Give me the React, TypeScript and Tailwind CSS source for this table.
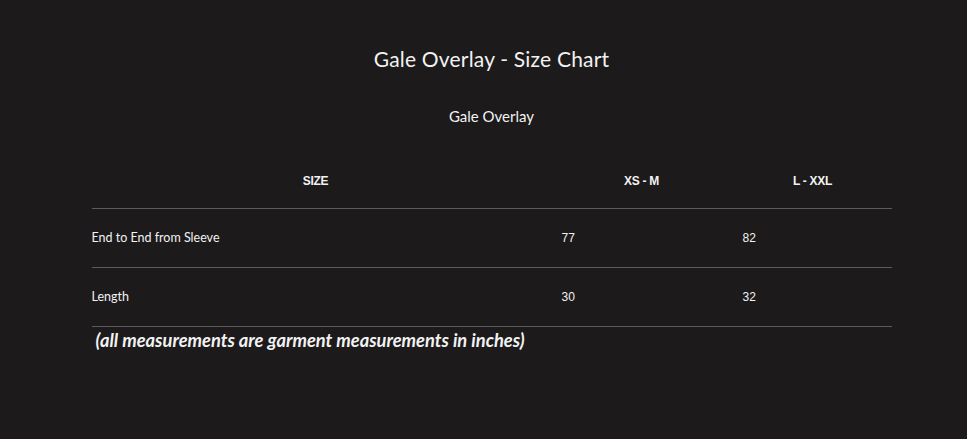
import React from 'react'

const ROWS = [
  { label: 'End to End from Sleeve', a: '77', b: '82' },
  { label: 'Length', a: '30', b: '32' },
]

function App() {
  return (
    <div className="min-h-[439px] w-full bg-[#1c1a1b] text-[#f2f2f2] font-['Lato',sans-serif] pl-[16px]">
      <div className="flex flex-col items-center">
        <h1 className="mt-[44px] text-[21px] leading-[30px] tracking-[0.2px]">Gale Overlay - Size Chart</h1>
        <p className="mt-[32px] text-[15px] leading-[20px]">Gale Overlay</p>
      </div>
      <div className="mx-auto w-[800px] mt-[40px]">
        <div className="grid grid-cols-[458px_184px_158px] h-[43px] items-start pt-[6px] border-b border-[#5c5a5b] text-[12px] font-bold font-['Liberation_Sans',sans-serif]">
          <div className="text-center pr-[10px] tracking-[-0.3px]">SIZE</div>
          <div className="text-center tracking-[-0.3px]">XS - M</div>
          <div className="text-center tracking-[-0.3px]">L - XXL</div>
        </div>
        {ROWS.map((r) => (
          <div key={r.label} className="grid grid-cols-[458px_184px_158px] h-[59px] items-center border-b border-[#5c5a5b] text-[12.5px]">
            <div>{r.label}</div>
            <div className="pl-[12px] text-[12px] font-['Liberation_Sans',sans-serif]">{r.a}</div>
            <div className="pl-[9px] text-[12px] font-['Liberation_Sans',sans-serif]">{r.b}</div>
          </div>
        ))}
        <p className="pl-[4px] mt-[1px] text-[18.3px] italic font-bold leading-[24px]">(all measurements are garment measurements in inches)</p>
      </div>
    </div>
  )
}

export default App
